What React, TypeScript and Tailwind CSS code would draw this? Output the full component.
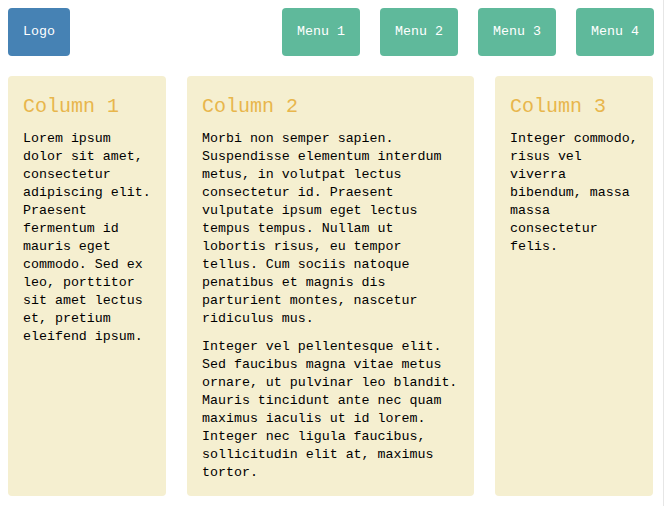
const columns = [
  {
    title: "Column 1",
    width: "w-[158px]",
    paragraphs: [
      "Lorem ipsum dolor sit amet, consectetur adipiscing elit. Praesent fermentum id mauris eget commodo. Sed ex leo, porttitor sit amet lectus et, pretium eleifend ipsum.",
    ],
  },
  {
    title: "Column 2",
    width: "w-[287px]",
    paragraphs: [
      "Morbi non semper sapien. Suspendisse elementum interdum metus, in volutpat lectus consectetur id. Praesent vulputate ipsum eget lectus tempus tempus. Nullam ut lobortis risus, eu tempor tellus. Cum sociis natoque penatibus et magnis dis parturient montes, nascetur ridiculus mus.",
      "Integer vel pellentesque elit. Sed faucibus magna vitae metus ornare, ut pulvinar leo blandit. Mauris tincidunt ante nec quam maximus iaculis ut id lorem. Integer nec ligula faucibus, sollicitudin elit at, maximus tortor.",
    ],
  },
  {
    title: "Column 3",
    width: "w-[158px]",
    paragraphs: [
      "Integer commodo, risus vel viverra bibendum, massa massa consectetur felis.",
    ],
  },
];

const menus = ["Menu 1", "Menu 2", "Menu 3", "Menu 4"];

export default function App() {
  return (
    <div className="w-[664px] min-h-[506px] border-r border-[#e6e6e6] bg-white p-2 pr-[9px] font-['Liberation_Mono',monospace] text-[13.3px] leading-[18px]">
      <header className="flex items-center justify-between">
        <div className="flex h-12 w-[62px] items-center justify-center rounded bg-[#4682b4] text-white">
          Logo
        </div>
        <nav className="flex gap-5">
          {menus.map((m) => (
            <div
              key={m}
              className="flex h-12 w-[78px] items-center justify-center rounded bg-[#5fb99b] text-white"
            >
              {m}
            </div>
          ))}
        </nav>
      </header>

      <main className="mt-5 flex gap-[21px]">
        {columns.map((col) => (
          <section key={col.title} className={`${col.width} rounded bg-[#f5efd0] p-[15px] pb-[14px]`}>
            <h2 className="mt-[2px] mb-[9px] text-[20px] leading-[28px] text-[#e8b64c]">{col.title}</h2>
            {col.paragraphs.map((p, i) => (
              <p key={i} className="mb-[10px] text-black last:mb-0">
                {p}
              </p>
            ))}
          </section>
        ))}
      </main>
    </div>
  );
}
